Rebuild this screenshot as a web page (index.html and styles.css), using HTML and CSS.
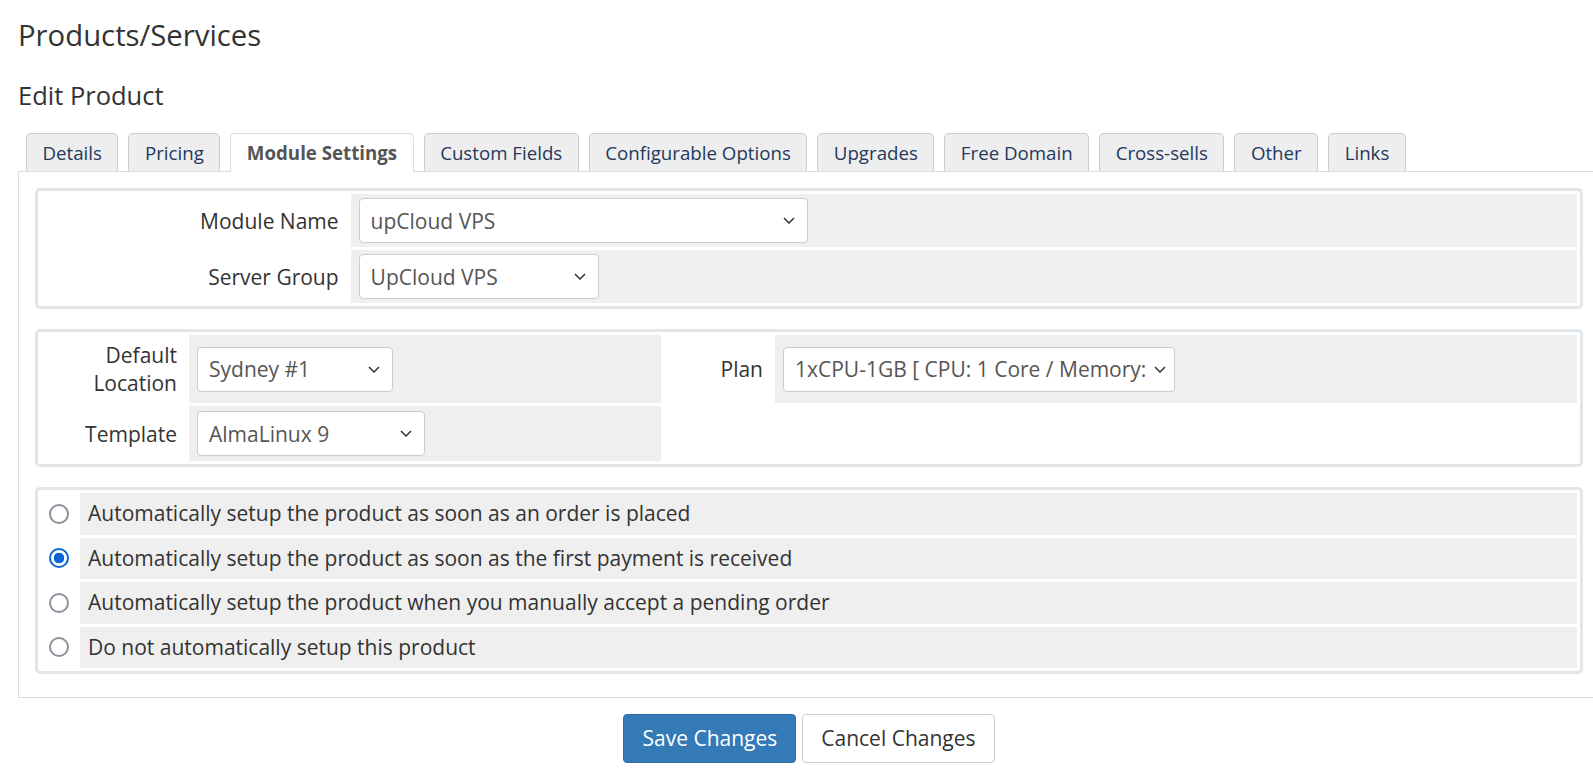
FILE: index.html
```html
<!DOCTYPE html>
<html>
<head>
<meta charset="utf-8">
<title>Edit Product</title>
<link rel="stylesheet" href="styles.css">
</head>
<body>
<div class="page">
  <h1 class="title">Products/Services</h1>
  <h2 class="subtitle">Edit Product</h2>

  <ul class="tabs">
    <li class="tab">Details</li>
    <li class="tab">Pricing</li>
    <li class="tab active">Module Settings</li>
    <li class="tab">Custom Fields</li>
    <li class="tab">Configurable Options</li>
    <li class="tab">Upgrades</li>
    <li class="tab">Free Domain</li>
    <li class="tab">Cross-sells</li>
    <li class="tab">Other</li>
    <li class="tab">Links</li>
  </ul>

  <div class="panel">
    <div class="box">
      <table class="form form-module">
        <tr>
          <td class="label">Module Name</td>
          <td class="field">
            <div class="select w-module"><span class="sel-text">upCloud VPS</span><svg class="chev" viewBox="0 0 12 7" width="12" height="7"><polyline points="1,1 6,6 11,1"/></svg></div>
          </td>
        </tr>
        <tr>
          <td class="label">Server Group</td>
          <td class="field">
            <div class="select w-group"><span class="sel-text">UpCloud VPS</span><svg class="chev" viewBox="0 0 12 7" width="12" height="7"><polyline points="1,1 6,6 11,1"/></svg></div>
          </td>
        </tr>
      </table>
    </div>

    <div class="box">
      <table class="form form-config">
        <tr>
          <td class="label c-l1 two-line">Default Location</td>
          <td class="field c-f1">
            <div class="select w-loc"><span class="sel-text">Sydney #1</span><svg class="chev" viewBox="0 0 12 7" width="12" height="7"><polyline points="1,1 6,6 11,1"/></svg></div>
          </td>
          <td class="label c-l2">Plan</td>
          <td class="field">
            <div class="select w-plan"><span class="sel-text">1xCPU-1GB [ CPU: 1 Core / Memory:</span><svg class="chev" viewBox="0 0 12 7" width="12" height="7"><polyline points="1,1 6,6 11,1"/></svg></div>
          </td>
        </tr>
        <tr>
          <td class="label">Template</td>
          <td class="field">
            <div class="select w-tpl"><span class="sel-text">AlmaLinux 9</span><svg class="chev" viewBox="0 0 12 7" width="12" height="7"><polyline points="1,1 6,6 11,1"/></svg></div>
          </td>
          <td class="blank"></td>
          <td class="blank"></td>
        </tr>
      </table>
    </div>

    <div class="box">
      <table class="form form-radio">
        <tr>
          <td class="radio-cell"><input type="radio" name="autosetup" class="radio"></td>
          <td class="field rtext">Automatically setup the product as soon as an order is placed</td>
        </tr>
        <tr>
          <td class="radio-cell"><input type="radio" name="autosetup" class="radio" checked></td>
          <td class="field rtext">Automatically setup the product as soon as the first payment is received</td>
        </tr>
        <tr>
          <td class="radio-cell"><input type="radio" name="autosetup" class="radio"></td>
          <td class="field rtext">Automatically setup the product when you manually accept a pending order</td>
        </tr>
        <tr>
          <td class="radio-cell"><input type="radio" name="autosetup" class="radio"></td>
          <td class="field rtext">Do not automatically setup this product</td>
        </tr>
      </table>
    </div>
  </div>

  <div class="actions">
    <button class="btn btn-primary">Save Changes</button>
    <button class="btn btn-default">Cancel Changes</button>
  </div>
</div>
</body>
</html>
```

FILE: styles.css
```css
html {
  overflow: hidden;
}

body {
  margin: 0;
  background: #ffffff;
  font-family: "Open Sans", "Liberation Sans", sans-serif;
  color: #333333;
}

.page {
  width: 1582px;
  padding-left: 18px;
}

.title {
  margin: 19px 0 0 0;
  font-size: 29.3px;
  line-height: 32px;
  font-weight: 400;
  color: #333333;
}

.subtitle {
  margin: 29px 0 0 0;
  font-size: 25.5px;
  line-height: 30px;
  font-weight: 400;
  color: #333333;
}

.tabs {
  list-style: none;
  margin: 23px 0 0 8px;
  padding: 0;
  display: flex;
  gap: 10px;
}

.tab {
  height: 37px;
  line-height: 37px;
  padding: 0 15.5px;
  font-size: 18.7px;
  color: #23395d;
  background: #eeeeee;
  border: 1px solid #cccccc;
  border-bottom: none;
  border-radius: 5px 5px 0 0;
  white-space: nowrap;
}

.tab.active {
  background: #ffffff;
  color: #555555;
  font-weight: 700;
  border-color: #dddddd;
  height: 38px;
  margin-bottom: -1px;
}

.panel {
  border: 1px solid #dddddd;
  padding: 16px 16px 3px 16px;
}

.box {
  border: 3px solid #e0e6e9;
  border-radius: 5px;
  margin-bottom: 20px;
  background: #ffffff;
}

.form {
  width: 100%;
  border-collapse: separate;
  border-spacing: 3px;
  font-size: 21px;
  line-height: 28px;
}

.form td {
  vertical-align: middle;
}

.label {
  text-align: right;
  padding: 6px 9px 6px 6px;
  color: #333333;
  background: #ffffff;
}

.field {
  background: #efefef;
  padding: 5px 8px;
}

.form-module .label {
  width: 20%;
}

.form-module .field {
  padding: 4px 8px;
}

.c-l1 {
  width: 130px;
}

.c-f1 {
  width: 456px;
}

.c-l2 {
  width: 93px;
}

.blank {
  background: #ffffff;
}

.select {
  display: flex;
  align-items: center;
  box-sizing: border-box;
  height: 45px;
  padding: 0 12px 0 11px;
  background: #ffffff;
  border: 1px solid #cccccc;
  border-radius: 4px;
  color: #555555;
  font-size: 21px;
}

.sel-text {
  flex: 1;
  min-width: 0;
  overflow: hidden;
  white-space: nowrap;
}

.chev {
  flex: none;
  margin-left: 4px;
  fill: none;
  stroke: #333333;
  stroke-width: 1.5;
}

.w-module { width: 449px; }
.w-group { width: 240px; }
.w-loc { width: 196px; }
.w-tpl { width: 228px; }
.w-plan { width: 392px; padding-left: 11px; padding-right: 8px; }

.radio-cell {
  width: 36px;
  text-align: center;
  padding: 0;
  background: #ffffff;
}

.rtext {
  padding: 6px 8px;
  line-height: 29.5px;
  color: #333333;
}

.radio {
  -webkit-appearance: none;
  appearance: none;
  display: block;
  margin: 0 auto;
  width: 20px;
  height: 20px;
  box-sizing: border-box;
  border: 2px solid #8f8f9d;
  border-radius: 50%;
  background: #ffffff;
}

.radio:checked {
  border: 2px solid #0b64d8;
  background: radial-gradient(circle, #0b64d8 0, #0b64d8 5px, #ffffff 5.6px);
}

.actions {
  display: flex;
  justify-content: center;
  gap: 6px;
  margin-top: 16px;
}

.btn {
  font-family: "Open Sans", "Liberation Sans", sans-serif;
  font-size: 21px;
  line-height: 29px;
  padding: 9px 18px;
  border-radius: 4px;
  border: 1px solid #cccccc;
  cursor: pointer;
}

.btn-primary {
  background: #337ab7;
  border-color: #2e6da4;
  color: #ffffff;
}

.btn-default {
  background: #ffffff;
  color: #333333;
}
```
